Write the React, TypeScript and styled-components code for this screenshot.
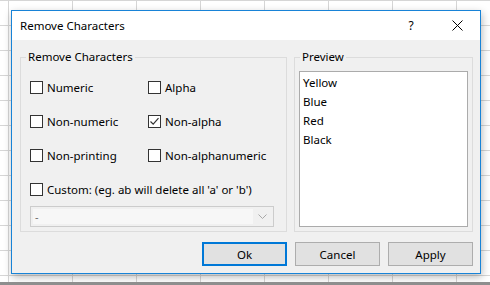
import React, { useState } from "react";
import styled, { createGlobalStyle } from "styled-components";

const GlobalStyle = createGlobalStyle`
  html, body {
    margin: 0;
    padding: 0;
  }
  body {
    font-family: "Noto Sans", "Liberation Sans", sans-serif;
    font-size: 11.5px;
    color: #000000;
  }
`;

const Sheet = styled.div`
  width: 490px;
  height: 285px;
  display: flex;
  flex-direction: column;
  background-color: #ffffff;
  background-image: linear-gradient(to right, #d6d6d6 1px, transparent 1px),
    linear-gradient(to bottom, #d6d6d6 1px, transparent 1px);
  background-size: 64px 25px;
  background-position: 8px 0;
  overflow: hidden;
`;

const DialogArea = styled.div`
  flex: 1;
  padding: 10px 0 0 11px;
`;

const SheetEdge = styled.div`
  height: 3px;
  background: #8e8e8e;
`;

const Dialog = styled.div`
  width: 470px;
  height: 264px;
  box-sizing: border-box;
  border: 1px solid #1883d7;
  background: #f0f0f0;
  display: flex;
  flex-direction: column;
  box-shadow: 1px 3px 8px rgba(0, 0, 0, 0.28);
`;

const TitleBar = styled.div`
  height: 29px;
  background: #ffffff;
  display: flex;
  align-items: center;
  padding-left: 8px;
`;

const Title = styled.span`
  flex: 1;
  font-size: 11.5px;
`;

const CaptionButton = styled.div`
  width: 46px;
  height: 29px;
  display: flex;
  align-items: center;
  justify-content: center;
  font-size: 12px;
`;

const Body = styled.div`
  flex: 1;
  display: flex;
  flex-direction: column;
  gap: 10px;
  padding: 10px 7px 7px 8px;
`;

const Groups = styled.div`
  display: flex;
  gap: 7px;
  height: 182px;
`;

const Group = styled.fieldset<{ $width: number }>`
  width: ${(p) => p.$width}px;
  height: 182px;
  box-sizing: border-box;
  margin: 0;
  padding: 0;
  min-width: 0;
  border: 1px solid #dcdcdc;
  display: flex;
  flex-direction: column;
`;

const Legend = styled.legend`
  padding: 0 2px;
  margin-left: 5px;
  line-height: 14px;
  font-size: 11.5px;
`;

const GroupInner = styled.div<{ $pad: string }>`
  flex: 1;
  display: flex;
  flex-direction: column;
  padding: ${(p) => p.$pad};
`;

const CheckGrid = styled.div`
  display: grid;
  grid-template-columns: 118px auto;
  grid-auto-rows: 34px;
`;

const CheckRow = styled.label<{ $wide?: boolean }>`
  display: flex;
  align-items: center;
  gap: 4px;
  grid-column: ${(p) => (p.$wide ? "span 2" : "auto")};
  white-space: nowrap;
`;

const Box = styled.span`
  width: 13px;
  height: 13px;
  box-sizing: border-box;
  border: 1px solid #333333;
  background: #ffffff;
  display: flex;
  align-items: center;
  justify-content: center;
`;

const Combo = styled.div`
  width: 244px;
  height: 21px;
  box-sizing: border-box;
  border: 1px solid #cccccc;
  background: #f0f0f0;
  display: flex;
  align-items: stretch;
  padding: 2px;
`;

const ComboField = styled.div`
  flex: 1;
  background: #f7f7f7;
  color: #6d6d6d;
  padding-left: 2px;
  display: flex;
  align-items: center;
  font-size: 11px;
`;

const ComboArrow = styled.div`
  width: 18px;
  display: flex;
  align-items: center;
  justify-content: center;
`;

const ListBox = styled.div`
  flex: 1;
  border: 1px solid #ababab;
  background: #ffffff;
  padding: 1px 3px;
`;

const ListItem = styled.div`
  line-height: 19px;
`;

const ButtonRow = styled.div`
  display: flex;
  justify-content: flex-end;
  gap: 8px;
`;

const Button = styled.button<{ $default?: boolean }>`
  width: 85px;
  height: 24px;
  box-sizing: border-box;
  background: #e1e1e1;
  border: ${(p) => (p.$default ? "2px solid #0078d7" : "1px solid #adadad")};
  font-family: inherit;
  font-size: 11.5px;
  color: #000000;
  padding: 0;
`;

const CheckMark = () => (
  <svg width="11" height="11" viewBox="0 0 11 11">
    <path d="M1.5 5.5 L4.2 8.2 L9.5 2.2" fill="none" stroke="#333" strokeWidth="1.2" />
  </svg>
);

const Check = ({ label, checked, wide }: { label: string; checked?: boolean; wide?: boolean }) => (
  <CheckRow $wide={wide}>
    <Box>{checked && <CheckMark />}</Box>
    {label}
  </CheckRow>
);

const App = () => {
  const [items] = useState(["Yellow", "Blue", "Red", "Black"]);

  return (
    <Sheet>
      <GlobalStyle />
      <DialogArea>
        <Dialog>
          <TitleBar>
            <Title>Remove Characters</Title>
            <CaptionButton>?</CaptionButton>
            <CaptionButton>
              <svg width="11" height="11" viewBox="0 0 11 11">
                <path d="M0.5 0.5 L10.5 10.5 M10.5 0.5 L0.5 10.5" stroke="#000" strokeWidth="1" />
              </svg>
            </CaptionButton>
          </TitleBar>
          <Body>
            <Groups>
              <Group $width={267}>
                <Legend>Remove Characters</Legend>
                <GroupInner $pad="6px 0 0 9px">
                  <CheckGrid>
                    <Check label="Numeric" />
                    <Check label="Alpha" />
                    <Check label="Non-numeric" />
                    <Check label="Non-alpha" checked />
                    <Check label="Non-printing" />
                    <Check label="Non-alphanumeric" />
                    <Check label="Custom:  (eg. ab will delete all 'a' or 'b')" wide />
                  </CheckGrid>
                  <Combo>
                    <ComboField>-</ComboField>
                    <ComboArrow>
                      <svg width="9" height="5" viewBox="0 0 9 5">
                        <path d="M0.5 0.5 L4.5 4.5 L8.5 0.5" fill="none" stroke="#a8a8a8" strokeWidth="1" />
                      </svg>
                    </ComboArrow>
                  </Combo>
                </GroupInner>
              </Group>
              <Group $width={179}>
                <Legend>Preview</Legend>
                <GroupInner $pad="7px 4px 4px 4px">
                  <ListBox>
                    {items.map((item) => (
                      <ListItem key={item}>{item}</ListItem>
                    ))}
                  </ListBox>
                </GroupInner>
              </Group>
            </Groups>
            <ButtonRow>
              <Button $default>Ok</Button>
              <Button>Cancel</Button>
              <Button>Apply</Button>
            </ButtonRow>
          </Body>
        </Dialog>
      </DialogArea>
      <SheetEdge />
    </Sheet>
  );
};

export default App;
